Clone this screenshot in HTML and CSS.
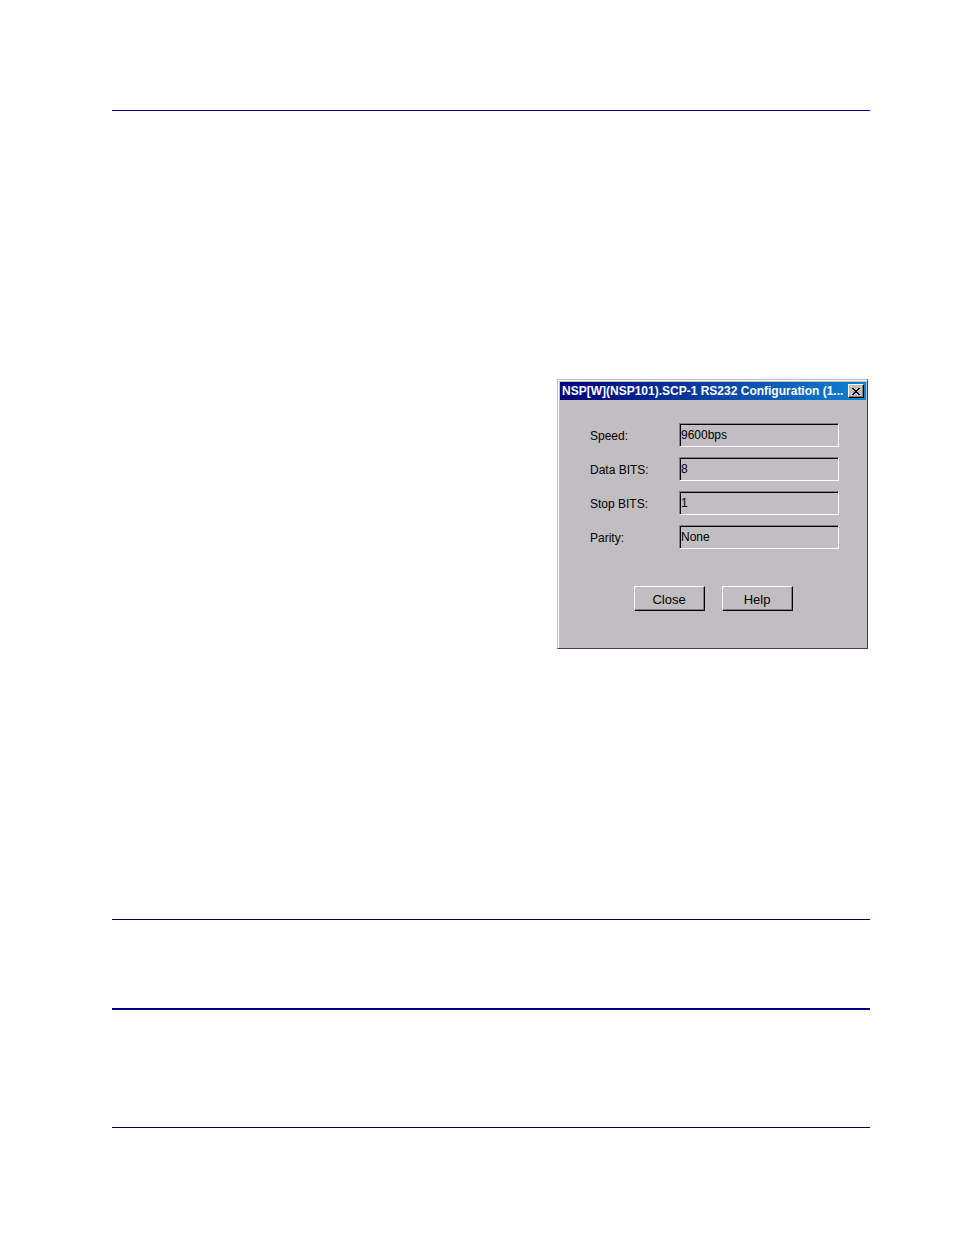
FILE: index.html
```
<!DOCTYPE html>
<html lang="en">
<head>
  <meta charset="utf-8">
  <title>RS232 Configuration</title>
  <meta name="viewport" content="width=device-width, initial-scale=1.0">
  <link rel="stylesheet" href="styles.css">
</head>
<body>
  <main class="page">
    <hr class="rule">

    <section class="figure">
      <form class="dialog" aria-labelledby="dialogTitle">
        <header class="titlebar">
          <h1 class="title" id="dialogTitle">NSP[W](NSP101).SCP-1 RS232 Configuration (1...</h1>
          <button type="button" class="btn-x" aria-label="Close window">
            <svg width="8" height="7" viewBox="0 0 8 7" shape-rendering="crispEdges">
              <path d="M0 0h2v1h1v1h2v-1h1v-1h2v1h-1v1h-1v1h-1v1h1v1h1v1h1v1h-2v-1h-1v-1h-2v1h-1v1h-2v-1h1v-1h1v-1h1v-1h-1v-1h-1v-1h-1z"/>
            </svg>
          </button>
        </header>

        <div class="fields">
          <label for="speed">Speed:</label>
          <input type="text" id="speed" value="9600bps" readonly>
          <label for="dataBits">Data BITS:</label>
          <input type="text" id="dataBits" value="8" readonly>
          <label for="stopBits">Stop BITS:</label>
          <input type="text" id="stopBits" value="1" readonly>
          <label for="parity">Parity:</label>
          <input type="text" id="parity" value="None" readonly>
        </div>

        <div class="actions">
          <button type="button" class="btn">Close</button>
          <button type="button" class="btn">Help</button>
        </div>
      </form>
    </section>

    <hr class="rule rule-dark">
    <hr class="rule rule-thick">
    <hr class="rule rule-dark rule-last">
  </main>
</body>
</html>
```
FILE: styles.css
```
* {
  box-sizing: border-box;
}

body {
  margin: 0;
  background-color: #ffffff;
  color: #000000;
  font-family: "Liberation Sans", Arial, sans-serif;
  font-size: 12px;
}

.page {
  padding: 110px 84px 107px 112px;
}

.rule {
  height: 1px;
  margin: 0;
  border: none;
  background-color: #000080;
}

.rule-dark {
  background-color: #000050;
}

.rule-thick {
  height: 2px;
  margin-top: 88px;
}

.rule-last {
  margin-top: 117px;
}

.figure {
  display: flex;
  justify-content: flex-end;
  padding: 268px 2px 270px 0;
}

/* dialog window */
.dialog {
  width: 311px;
  padding: 2px 1px 37px 2px;
  background-color: #c0bec0;
  border: 1px solid;
  border-color: #c0bec0 #404040 #404040 #c0bec0;
  box-shadow: inset 1px 1px 0 #ffffff;
}

.titlebar {
  display: flex;
  align-items: center;
  justify-content: space-between;
  height: 18px;
  padding: 0 2px;
  background-image: linear-gradient(to right, #000078, #1084d0);
}

.title {
  margin: 0;
  color: #ffffff;
  font-size: 12px;
  line-height: 18px;
  white-space: nowrap;
}

.btn-x {
  display: flex;
  align-items: center;
  justify-content: center;
  flex: none;
  width: 16px;
  height: 14px;
  padding: 0;
  background-color: #c0bec0;
  border: 1px solid;
  border-color: #ffffff #000000 #000000 #ffffff;
  box-shadow: inset -1px -1px 0 #808080;
}

.fields {
  display: grid;
  grid-template-columns: 89px 160px;
  row-gap: 10px;
  align-items: center;
  padding: 23px 0 0 30px;
}

.fields label {
  padding-top: 2px;
  line-height: 22px;
}

.fields input {
  width: 100%;
  height: 24px;
  padding: 0 0 1px 1px;
  background-color: #c0bec0;
  border: 1px solid;
  border-color: #808080 #ffffff #ffffff #808080;
  border-radius: 0;
  box-shadow: inset 1px 1px 0 #000000;
  color: #000000;
  font: inherit;
  outline: none;
}

.actions {
  display: flex;
  justify-content: center;
  gap: 17px;
  padding-top: 37px;
}

.btn {
  width: 71px;
  height: 25px;
  padding: 1px 0 0;
  background-color: #c0bec0;
  border: 1px solid;
  border-color: #ffffff #000000 #000000 #ffffff;
  border-radius: 0;
  box-shadow: inset -1px -1px 0 #808080;
  color: #000000;
  font: inherit;
  font-size: 13px;
}
```
